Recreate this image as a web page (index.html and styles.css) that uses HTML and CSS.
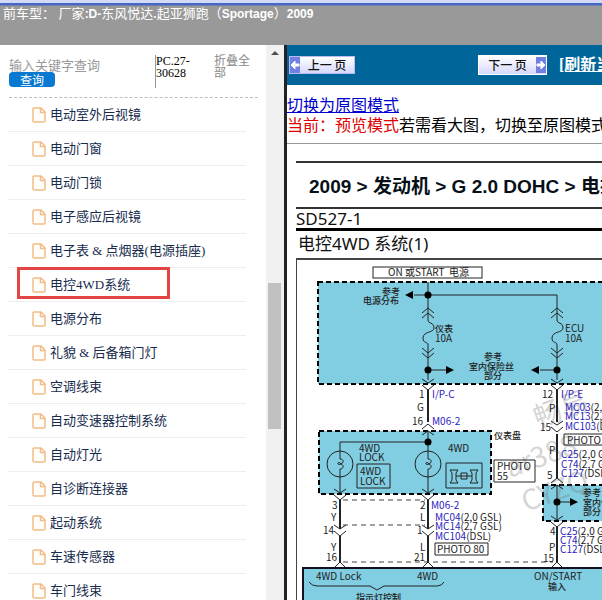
FILE: index.html
```html
<!DOCTYPE html>
<html lang="zh-CN">
<head>
<meta charset="utf-8">
<title>东风悦达.起亚狮跑</title>
<link rel="stylesheet" href="styles.css">
</head>
<body>
<svg class="defs" aria-hidden="true">
  <symbol id="file" viewBox="0 0 14 16"><path d="M2 1h7l4 4v9q0 1-1 1H2q-1 0-1-1V2q0-1 1-1zM8.500 1v4.500H13" fill="#fffdf9" stroke="#f2bd86" stroke-width="1.500"/></symbol>
</svg>
<header class="topbar">
  前车型： 厂家<b>:D-</b>东风悦达<b>.</b>起亚狮跑（<b>Sportage</b>）<b>2009</b>
</header>
<div class="workspace">
  <aside class="sidebar">
    <div class="tree">
      <form class="search">
        <div class="query">
          <input type="text" aria-label="关键字" placeholder="输入关键字查询">
          <button type="button">查询</button>
        </div>
        <div class="code">PC.27-<br>30628</div>
        <a class="fold" href="#">折叠全部</a>
      </form>
      <ul class="items">
        <li><a href="#"><svg><use href="#file"/></svg>电动室外后视镜</a></li>
        <li><a href="#"><svg><use href="#file"/></svg>电动门窗</a></li>
        <li><a href="#"><svg><use href="#file"/></svg>电动门锁</a></li>
        <li><a href="#"><svg><use href="#file"/></svg>电子感应后视镜</a></li>
        <li><a href="#"><svg><use href="#file"/></svg><span>电子表 &amp; 点烟器(电源插座)</span></a></li>
        <li class="marked"><a href="#"><svg><use href="#file"/></svg>电控4WD系统</a></li>
        <li><a href="#"><svg><use href="#file"/></svg>电源分布</a></li>
        <li><a href="#"><svg><use href="#file"/></svg><span>礼貌 &amp; 后备箱门灯</span></a></li>
        <li><a href="#"><svg><use href="#file"/></svg>空调线束</a></li>
        <li><a href="#"><svg><use href="#file"/></svg>自动变速器控制系统</a></li>
        <li><a href="#"><svg><use href="#file"/></svg>自动灯光</a></li>
        <li><a href="#"><svg><use href="#file"/></svg>自诊断连接器</a></li>
        <li><a href="#"><svg><use href="#file"/></svg>起动系统</a></li>
        <li><a href="#"><svg><use href="#file"/></svg>车速传感器</a></li>
        <li><a href="#"><svg><use href="#file"/></svg>车门线束</a></li>
      </ul>
    </div>
    <div class="scroll" aria-hidden="true"><i class="up"></i><i class="thumb"></i></div>
  </aside>
  <main class="viewer">
    <nav class="pager">
      <button class="page" type="button"><svg viewBox="0 0 10 16"><path d="M1 8l4-4v3h4v2H5v3z" fill="#fff" stroke="#fff"/></svg><span>上一 页</span></button>
      <button class="page next" type="button"><span>下一 页</span><svg viewBox="0 0 10 16"><path d="M9 8L5 4v3H1v2h4v3z" fill="#fff" stroke="#fff"/></svg></button>
      <a class="refresh" href="#">[刷新当前页]</a>
    </nav>
    <div class="mode">
      <a href="#">切换为原图模式</a>
      <p><span>当前：预览模式</span>若需看大图，切换至原图模式</p>
    </div>
    <article class="sheet">
      <h1>2009 &gt; 发动机 &gt; G 2.0 DOHC &gt; 电控4WD</h1>
      <p class="number">SD527-1</p>
      <h2>电控4WD 系统(1)</h2>
      <svg class="diagram" viewBox="296 258 400 342">
        <defs>
          <g id="fuse" class="wire">
            <path d="M0 308V320C0 324 6 322 6 328C6 333-5 331-5 338C-5 344 0 341 0 345V366M-6 313l6-5l6 5M-6 318l6-5l6 5M-6 348l6 5l6-5M-6 353l6 5l6-5"/>
          </g>
          <path id="down" class="wire" d="M-6-5L0-1L6-5M-6 1L0 6L6 1"/>
          <path id="upward" class="wire" d="M-6 5L0 1L6 5M-6-1L0-6L6-1"/>
          <g id="lamp" class="wire"><circle r="13"/><path d="M0-22V-5C4-5 4-1 1 0C-1 1-3 0-2-1C-1-2 1-1 1 0C4 1 4 5 0 5V30"/></g>
        </defs>
        <path d="M296 700V259H700" class="frame"/>
        <rect x="318" y="282" width="400" height="102" class="unit"/>
        <rect x="319" y="431" width="172" height="63" class="unit"/>
        <rect x="543" y="485" width="150" height="36" class="unit"/>
        <path d="M303 700V568H700V700z" class="block"/>
        <g class="mark">
          <text transform="translate(538 428) rotate(-20)">畅易</text>
          <text transform="translate(510 478) rotate(-20)">ar388</text>
          <text transform="translate(526 512) rotate(-20)">CYZQ</text>
        </g>
        <g class="wire">
          <rect x="373" y="267" width="109" height="11"/>
          <path d="M428 282V308M414 295H557V308M428 366V380M428 370H448M557 366V380M540 370H557"/>
          <path d="M340 442H428V431M357 464h33v24h-33zM446 463h36v25h-36zM494 460h41v22h-41zM435 543h53v12h-53zM564 434h60v11h-60z"/>
          <path d="M557 485V521M557 502H572M309 582q3 4 8 4h53l7 4l7-4h53q5 0 7-4"/>
          <path class="light" d="M343 500H425M343 525H425M343 562H553"/>
          <path class="thick" d="M428 390V422M557 390V422M557 434V479M340 500V529M428 500V529M340 536V563M428 536V563M557 526V563"/>
          <path d="M450 470h8l-2 3v7l2 3h-8l2-3v-7zM470 470h8l-2 3v7l2 3h-8l2-3v-7zM456 476h16M461 473h6v6h-6z"/>
        </g>
        <use href="#fuse" x="428"/><use href="#fuse" x="557"/>
        <use href="#down" x="428" y="384"/><use href="#down" x="557" y="384"/>
        <use href="#upward" x="428" y="430"/><use href="#down" x="557" y="426"/>
        <use href="#upward" x="557" y="484"/><use href="#down" x="557" y="521"/>
        <use href="#down" x="340" y="494"/><use href="#down" x="428" y="494"/>
        <use href="#down" x="340" y="530"/><use href="#down" x="428" y="530"/>
        <path class="wire" d="M335 567l5-5l5 5M423 567l5-5l5 5M552 567l5-5l5 5"/>
        <use href="#lamp" x="340" y="464"/><use href="#lamp" x="428" y="464"/>
        <g class="solid">
          <circle cx="428" cy="295" r="3.500"/><circle cx="428" cy="370" r="3.500"/><circle cx="557" cy="370" r="3.500"/>
          <circle cx="428" cy="442" r="3.500"/><circle cx="557" cy="502" r="3.500"/>
          <path d="M405 295l8-4v8zM454 370l-8-4v8zM531 370l8-4v8zM578 502l-8-4v8z"/>
        </g>
        <g class="label">
          <text x="388" y="276">ON 或START &#160;电源</text>
          <text class="small" x="382" y="295">参考</text><text class="small" x="363" y="304">电源分布</text>
          <text class="small" x="435" y="332">仪表</text><text x="435" y="342">10A</text>
          <text x="565" y="332">ECU</text><text x="565" y="342">10A</text>
          <text class="small" x="484" y="360">参考</text><text class="small" x="469" y="370">室内保险丝</text><text class="small" x="484" y="379">部分</text>
          <text x="419" y="398">1</text><text x="417" y="411">G</text><text x="412" y="425">16</text>
          <text x="542" y="398">12</text><text x="549" y="412">P</text><text x="540" y="431">15</text>
          <text x="494" y="439" class="small">仪表盘</text>
          <text x="359" y="452">4WD</text><text x="359" y="461">LOCK</text>
          <text x="360" y="475">4WD</text><text x="360" y="485">LOCK</text>
          <text x="448" y="452">4WD</text>
          <text x="497" y="470">PHOTO</text><text x="497" y="480">55</text>
          <text x="567" y="444">PHOTO 54</text>
          <text x="549" y="454">P</text><text x="547" y="479">5</text>
          <text x="332" y="509">3</text><text x="420" y="509">2</text>
          <text x="331" y="521">Y</text><text x="420" y="521">L</text>
          <text x="323" y="534">14</text><text x="417" y="534">1</text>
          <text x="331" y="551">Y</text><text x="420" y="551">L</text>
          <text x="326" y="561">16</text><text x="414" y="561">21</text>
          <text x="437" y="553">PHOTO 80</text>
          <text x="550" y="535">4</text><text x="549" y="551">P</text><text x="543" y="562">15</text>
          <text class="small" x="583" y="496">参考</text><text class="small" x="583" y="506">室内保险丝</text><text class="small" x="583" y="515">部分</text>
          <text x="316" y="580">4WD Lock</text><text x="417" y="580">4WD</text>
          <text x="534" y="580">ON/START</text><text class="small" x="548" y="590">输入</text>
          <text class="small" x="356" y="601">指示灯控制</text>
          <text x="432" y="398" class="blue">I/P-C</text><text x="432" y="425" class="blue">M06-2</text>
          <text x="561" y="398" class="blue">I/P-E</text>
          <text x="565" y="411"><tspan class="blue">MC03</tspan>(2,0 GSL)</text>
          <text x="565" y="420"><tspan class="blue">MC13</tspan>(2,7 GSL)</text>
          <text x="565" y="430"><tspan class="blue">MC103</tspan>(DSL)</text>
          <text x="561" y="458"><tspan class="blue">C25</tspan>(2,0 GSL)</text>
          <text x="561" y="468"><tspan class="blue">C74</tspan>(2,7 GSL)</text>
          <text x="561" y="477"><tspan class="blue">C127</tspan>(DSL)</text>
          <text x="431" y="509" class="blue">M06-2</text>
          <text x="435" y="521"><tspan class="blue">MC04</tspan>(2,0 GSL)</text>
          <text x="435" y="530"><tspan class="blue">MC14</tspan>(2,7 GSL)</text>
          <text x="435" y="540"><tspan class="blue">MC104</tspan>(DSL)</text>
          <text x="560" y="535"><tspan class="blue">C25</tspan>(2,0 GSL)</text>
          <text x="560" y="544"><tspan class="blue">C74</tspan>(2,7 GSL)</text>
          <text x="560" y="553"><tspan class="blue">C127</tspan>(DSL)</text>
        </g>
      </svg>
    </article>
  </main>
</div>
</body>
</html>
```
FILE: styles.css
```css
*, *::after { box-sizing: border-box; }
body {
  margin: 0;
  height: 100vh;
  overflow: hidden;
  display: flex;
  flex-direction: column;
  background: #fff;
  font: 13px/16px "Liberation Serif", "Noto Sans CJK SC", serif;
}
p, h1, h2, ul { margin: 0; padding: 0; }
.defs { position: absolute; width: 0; height: 0; }
.topbar {
  flex: none;
  height: 45px;
  padding: 2px 3px;
  border-top: 3px solid #d3d9f7;
  background: linear-gradient(#4668c4 2px, #999 3px);
  color: #fff;
  white-space: nowrap;
  font: 13px/18px "Liberation Sans", "Noto Sans CJK SC", sans-serif;
}
.topbar b { font-size: 12px; }
.workspace { flex: 1; min-height: 0; display: flex; }
.sidebar {
  flex: none;
  width: 287px;
  display: flex;
  justify-content: space-between;
  border-right: 3px solid #222;
}
.tree { padding: 10px 0 0 9px; width: 258px; overflow: hidden; }
.search {
  display: flex;
  height: 43px;
  border-bottom: 1px dashed #b9c1c5;
}
.query {
  width: 147px;
  height: 33px;
  padding-top: 2px;
  border-right: 1px solid #999;
  display: flex;
  flex-direction: column;
  align-items: flex-start;
}
.query input {
  width: 140px;
  height: 15px;
  padding: 0;
  border: 0;
  outline: 0;
  background: none;
  font: 13px/15px "Noto Sans CJK SC", sans-serif;
}
.query input::placeholder { color: #999; opacity: 1; }
.query button {
  width: 46px;
  height: 15px;
  padding: 0;
  border: 0;
  border-radius: 4px;
  background: #0878d0;
  color: #fff;
  font: 12px/15px "Noto Sans CJK SC", sans-serif;
}
.code { width: 58px; font-size: 12px; line-height: 12px; }
.fold { width: 37px; color: #888; font-size: 12px; line-height: 12px; text-decoration: none; }
.items { list-style: none; margin-left: -1px; width: 238px; }
.items li { position: relative; height: 34px; border-bottom: 1px solid #eee; }
.items a {
  display: flex;
  align-items: center;
  gap: 4px;
  height: 33px;
  padding-left: 24px;
  color: #172b4d;
  text-decoration: none;
  white-space: nowrap;
}
.items svg { width: 14px; height: 16px; }
.marked::after {
  content: "";
  position: absolute;
  left: 9px;
  top: -1px;
  width: 153px;
  height: 32px;
  border: 3px solid #e34444;
}
.scroll { width: 18px; padding: 6px 3px 0 2px; background: #f1f1f1; }
.up {
  display: block;
  margin: 0 3px;
  border: 4px solid transparent;
  border-top: 0;
  border-bottom-color: #505050;
}
.thumb { display: block; margin-top: 228px; height: 146px; background: #c1c1c1; }
.viewer { flex: 1; min-width: 0; overflow: hidden; }
.pager {
  display: flex;
  align-items: center;
  height: 40px;
  padding-left: 2px;
  background: #069;
  white-space: nowrap;
}
.page {
  flex: none;
  display: flex;
  align-items: center;
  width: 66px;
  height: 18px;
  padding: 0;
  border: 1px solid #b9bdf3;
  background: linear-gradient(#fff, #d6d8fb);
  color: #111;
  font: 500 12px/16px "Noto Sans CJK SC", sans-serif;
}
.page span { flex: 1; }
.page svg { width: 10px; height: 16px; background: #7180e2; }
.next { width: 69px; height: 20px; margin-left: 123px; border-color: #fff; }
.refresh {
  margin-left: 12px;
  color: #fff;
  font: bold 16px/20px "Liberation Serif", "Noto Sans CJK SC", serif;
}
.mode {
  height: 59px;
  padding-top: 11px;
  border-bottom: 1px solid #999;
  font-size: 16px;
  line-height: 20px;
  white-space: nowrap;
}
.mode a { display: block; color: #00c; }
.mode span { color: #d00; }
.sheet {
  margin: 17px 0 0 9px;
  border-top: 2px solid #333;
  color: #111;
  font-family: "Noto Sans", "Noto Sans CJK SC", sans-serif;
  white-space: nowrap;
}
.sheet h1 {
  height: 46px;
  padding-left: 13px;
  border-bottom: 2px solid #333;
  color: #071018;
  font: bold 19px/48px "Liberation Sans", "Noto Sans CJK SC", sans-serif;
}
.number { height: 22px; border-bottom: 3px solid #000; font-size: 17px; line-height: 20px; }
.sheet h2 { height: 27px; padding-left: 2px; font-size: 17px; line-height: 26px; font-weight: 400; }
.diagram { display: block; width: 400px; height: 342px; }
.frame { fill: none; stroke: #444; stroke-width: 2; }
.unit { fill: #81cee2; stroke: #000; stroke-width: 2; stroke-dasharray: 5 3; }
.block { fill: #81cee2; stroke: #112; stroke-width: 2; }
.wire { fill: none; stroke: #222; stroke-width: 1; }
.light { stroke-dasharray: 5 4; stroke: #444; }
.thick { stroke-width: 2; }
.solid { fill: #000; }
.label { fill: #222; font: 10px "Noto Sans CJK SC", sans-serif; }
.label .small { font-size: 9px; font-weight: 500; }
.label .blue { fill: #2b24bd; }
.mark { fill: #777; opacity: .3; font: 28px "Noto Sans CJK SC", sans-serif; }
```
